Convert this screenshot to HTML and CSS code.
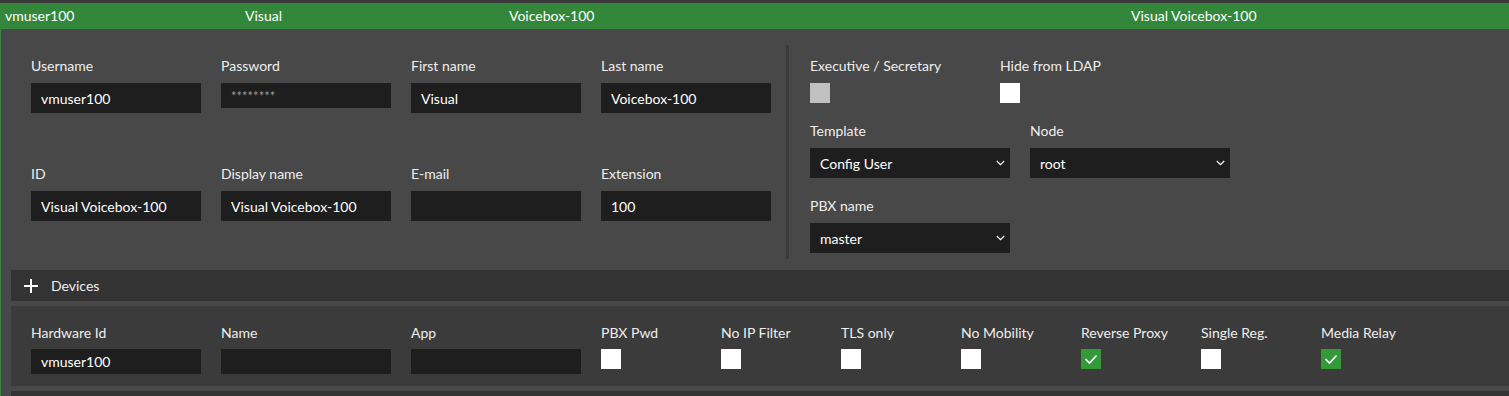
FILE: index.html
```html
<!DOCTYPE html>
<html lang="en">
<head>
  <meta charset="UTF-8">
  <title>User - vmuser100</title>
  <link rel="stylesheet" href="styles.css">
</head>
<body>
  <div class="row-head">
    <span>vmuser100</span>
    <span>Visual</span>
    <span>Voicebox-100</span>
    <span>Visual Voicebox-100</span>
  </div>

  <div class="panel">
    <div class="user-form">
      <div class="fields">
        <div class="field"><label>Username</label><input type="text" value="vmuser100" readonly></div>
        <div class="field"><label>Password</label><input type="text" class="pwd" value="********" readonly></div>
        <div class="field"><label>First name</label><input type="text" value="Visual" readonly></div>
        <div class="field"><label>Last name</label><input type="text" value="Voicebox-100" readonly></div>
        <div class="field"><label>ID</label><input type="text" value="Visual Voicebox-100" readonly></div>
        <div class="field"><label>Display name</label><input type="text" value="Visual Voicebox-100" readonly></div>
        <div class="field"><label>E-mail</label><input type="text" value="" readonly></div>
        <div class="field"><label>Extension</label><input type="text" value="100" readonly></div>
      </div>

      <div class="side">
        <div class="side-row">
          <div class="field narrow"><label>Executive / Secretary</label><span class="box disabled"></span></div>
          <div class="field narrow"><label>Hide from LDAP</label><span class="box"></span></div>
        </div>
        <div class="side-row">
          <div class="field">
            <label>Template</label>
            <div class="select"><span>Config User</span>
              <svg width="9" height="6" viewBox="0 0 9 6"><polyline points="0.8,1 4.5,4.7 8.2,1" fill="none" stroke="#fff" stroke-width="1.2"/></svg>
            </div>
          </div>
          <div class="field">
            <label>Node</label>
            <div class="select"><span>root</span>
              <svg width="9" height="6" viewBox="0 0 9 6"><polyline points="0.8,1 4.5,4.7 8.2,1" fill="none" stroke="#fff" stroke-width="1.2"/></svg>
            </div>
          </div>
        </div>
        <div class="side-row">
          <div class="field">
            <label>PBX name</label>
            <div class="select"><span>master</span>
              <svg width="9" height="6" viewBox="0 0 9 6"><polyline points="0.8,1 4.5,4.7 8.2,1" fill="none" stroke="#fff" stroke-width="1.2"/></svg>
            </div>
          </div>
        </div>
      </div>
    </div>

    <div class="section-bar">
      <svg class="plus" width="14" height="14" viewBox="0 0 14 14"><rect x="6" y="0" width="2" height="14" fill="#fff"/><rect x="0" y="6" width="14" height="2" fill="#fff"/></svg>
      <span>Devices</span>
    </div>

    <div class="device-row">
      <div class="field"><label>Hardware Id</label><input type="text" value="vmuser100" readonly></div>
      <div class="field"><label>Name</label><input type="text" value="" readonly></div>
      <div class="field"><label>App</label><input type="text" value="" readonly></div>
      <div class="field check"><label>PBX Pwd</label><span class="box"></span></div>
      <div class="field check"><label>No IP Filter</label><span class="box"></span></div>
      <div class="field check"><label>TLS only</label><span class="box"></span></div>
      <div class="field check"><label>No Mobility</label><span class="box"></span></div>
      <div class="field check"><label>Reverse Proxy</label>
        <span class="box checked"><svg width="20" height="20" viewBox="0 0 20 20"><polyline points="4.5,10 8.5,14 15.5,6.5" fill="none" stroke="#fff" stroke-width="1.6"/></svg></span>
      </div>
      <div class="field check"><label>Single Reg.</label><span class="box"></span></div>
      <div class="field check"><label>Media Relay</label>
        <span class="box checked"><svg width="20" height="20" viewBox="0 0 20 20"><polyline points="4.5,10 8.5,14 15.5,6.5" fill="none" stroke="#fff" stroke-width="1.6"/></svg></span>
      </div>
    </div>

    <div class="section-bar"></div>
  </div>
</body>
</html>
```

FILE: styles.css
```css
body {
  margin: 0;
  border-top: 3px solid #3a3a3a;
  background-color: #484848;
  font-family: Lato, "Segoe UI", sans-serif;
  font-size: 14px;
  color: #eee;
}

.row-head {
  display: grid;
  grid-template-columns: 240px 264px 622px 1fr;
  height: 26px;
  line-height: 26px;
  padding-left: 5px;
  background-color: #33873a; /* verde do cabecalho */
  color: #fff;
}

.panel {
  border-left: 1px solid #33873a;
  background-color: #484848;
  padding-bottom: 20px;
}

.user-form {
  display: flex;
  align-items: flex-start;
  padding: 16px 0 0 30px;
}

.fields {
  display: grid;
  grid-template-columns: repeat(4, 170px);
  column-gap: 20px;
  row-gap: 53px;
  margin: 13px 15px 0 0;
}

.field label {
  display: block;
  line-height: 16px;
  margin-bottom: 9px;
}

input {
  display: block;
  box-sizing: border-box;
  width: 170px;
  height: 30px;
  padding: 0 10px;
  border: none;
  outline: none;
  background-color: #1e1e1e;
  color: #fff;
  font-family: inherit;
  font-size: 14px;
}

input.pwd {
  height: 25px;
  margin-top: 3px;
  color: #9a9a9a;
  font-size: 13px;
}

.side {
  display: flex;
  flex-direction: column;
  gap: 20px;
  border-left: 3px solid #3b3b3b;
  padding: 13px 0 6px 21px;
}

.side-row {
  display: flex;
  gap: 20px;
}

.side-row .narrow {
  width: 170px;
}

.select {
  display: flex;
  align-items: center;
  justify-content: space-between;
  box-sizing: border-box;
  width: 200px;
  height: 30px;
  padding: 0 5px 0 10px;
  background-color: #1e1e1e;
  color: #fff;
}

.box {
  display: block;
  width: 20px;
  height: 20px;
  background-color: #fff;
}

.box.disabled {
  background-color: #c0c0c0;
}

.box.checked {
  background-color: #339a3a;
}

.box svg {
  display: block;
}

.section-bar {
  display: flex;
  align-items: center;
  gap: 13px;
  height: 31px;
  margin: 11px 0 0 10px;
  padding-left: 13px;
  background-color: #333;
}

.device-row {
  display: flex;
  gap: 20px;
  margin: 5px 0 0 10px;
  padding: 19px 20px 12px;
  background-color: #3b3b3b;
}

.device-row .field label {
  margin-bottom: 8px;
}

.device-row input {
  height: 25px;
}

.device-row .check {
  width: 100px;
}

.device-row + .section-bar {
  margin-top: 5px;
}
```
